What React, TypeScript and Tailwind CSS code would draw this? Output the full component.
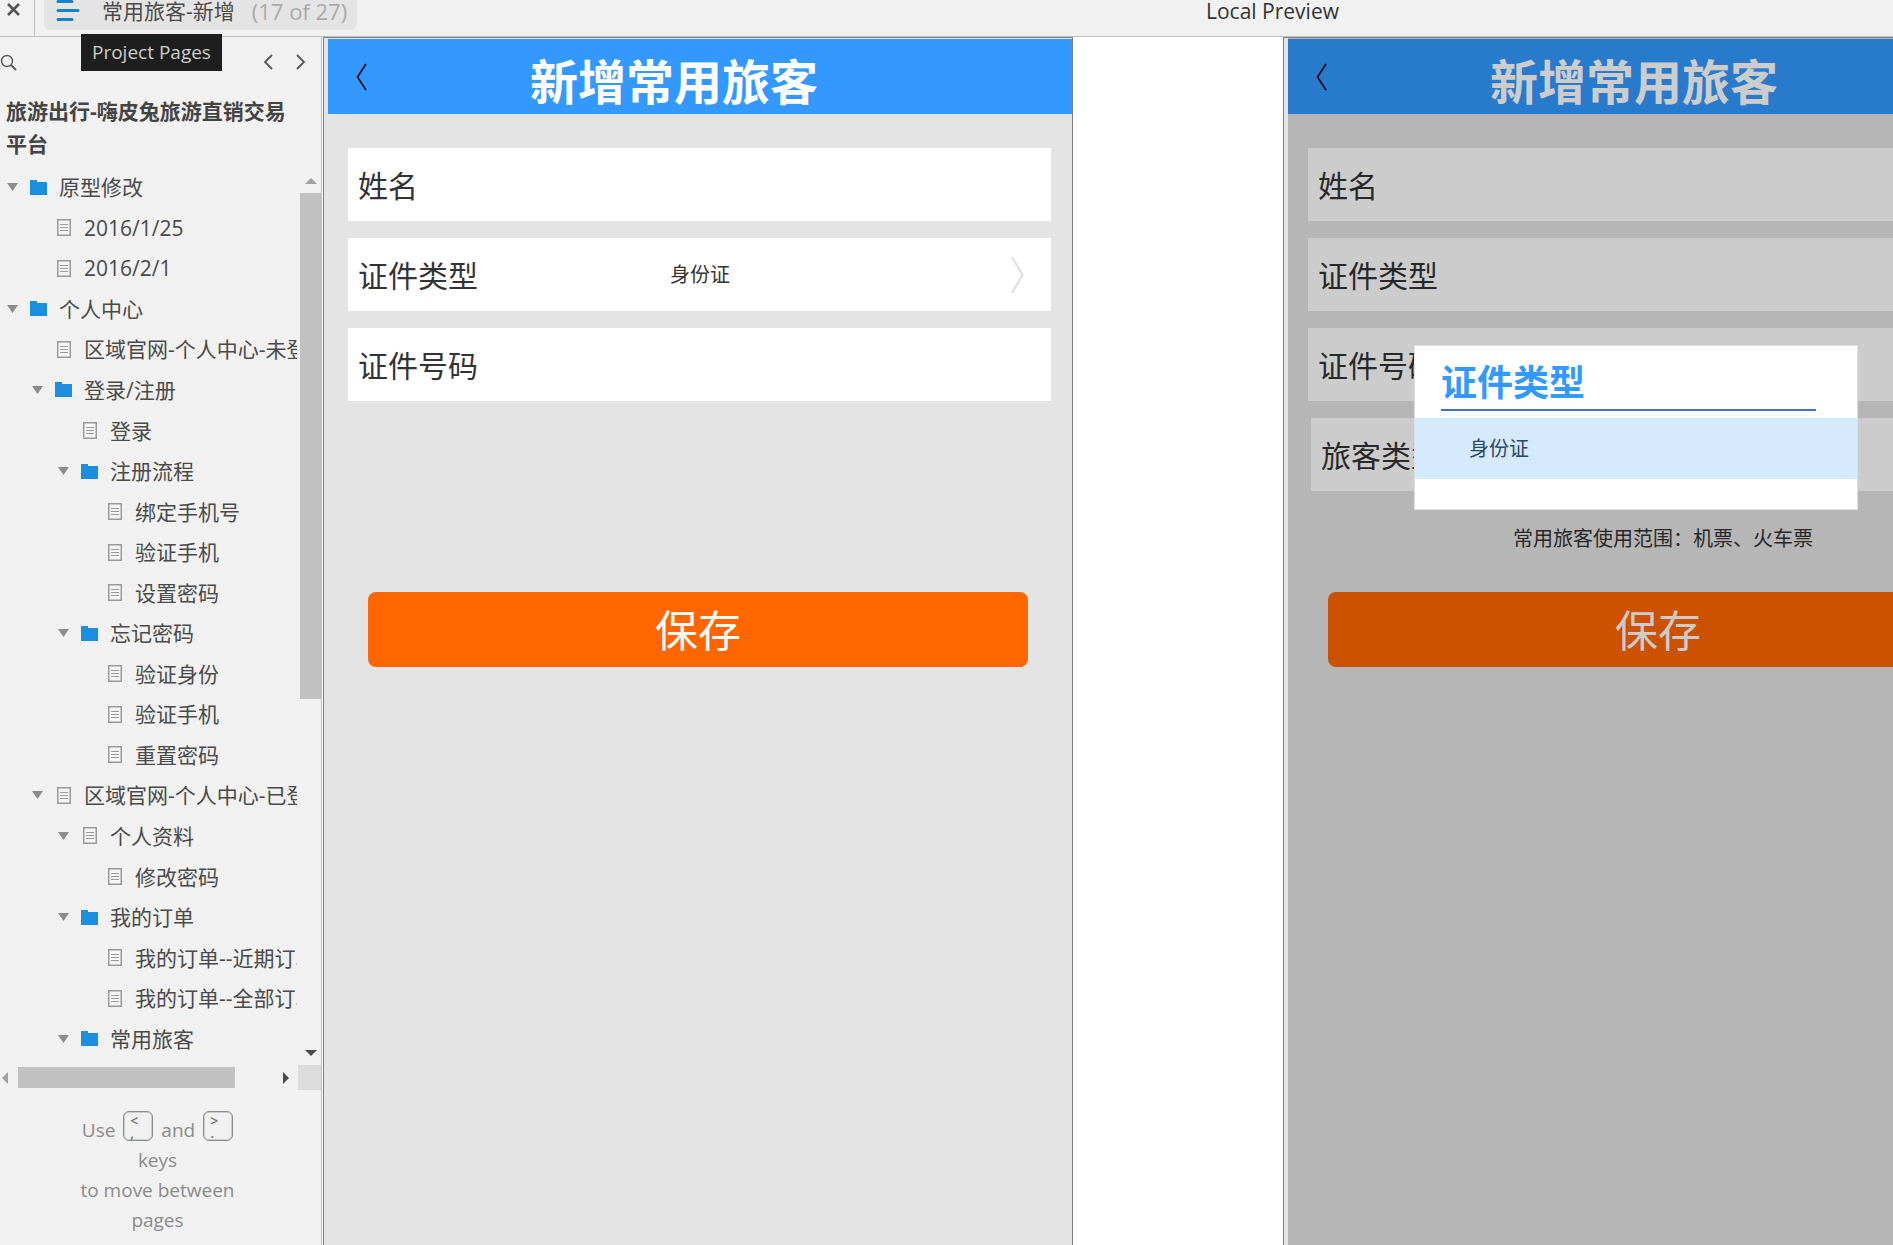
import React, { useState } from 'react';

type TreeItem = {
  text: string;
  level: number;
  folder?: boolean;
  open?: boolean;
};

const pages: TreeItem[] = [
  { text: '原型修改', level: 0, folder: true, open: true },
  { text: '2016/1/25', level: 1 },
  { text: '2016/2/1', level: 1 },
  { text: '个人中心', level: 0, folder: true, open: true },
  { text: '区域官网-个人中心-未登录', level: 1 },
  { text: '登录/注册', level: 1, folder: true, open: true },
  { text: '登录', level: 2 },
  { text: '注册流程', level: 2, folder: true, open: true },
  { text: '绑定手机号', level: 3 },
  { text: '验证手机', level: 3 },
  { text: '设置密码', level: 3 },
  { text: '忘记密码', level: 2, folder: true, open: true },
  { text: '验证身份', level: 3 },
  { text: '验证手机', level: 3 },
  { text: '重置密码', level: 3 },
  { text: '区域官网-个人中心-已登录', level: 1, open: true },
  { text: '个人资料', level: 2, open: true },
  { text: '修改密码', level: 3 },
  { text: '我的订单', level: 2, folder: true, open: true },
  { text: '我的订单--近期订单', level: 3 },
  { text: '我的订单--全部订单', level: 3 },
  { text: '常用旅客', level: 2, folder: true, open: true },
];

const indents = ['pl-[7px]', 'pl-[32px]', 'pl-[58px]', 'pl-[83px]'];

function FolderIcon() {
  return (
    <svg width="17" height="15" viewBox="0 0 17 15" fill="#1a8ee0">
      <path d="M0 0h7v2h10v13H0z" />
    </svg>
  );
}

function PageIcon() {
  return (
    <svg width="14" height="17" viewBox="0 0 14 17" fill="none" stroke="#999" className="ml-[2px]">
      <rect x="0.75" y="0.75" width="12.5" height="15.5" strokeWidth="1.5" fill="#f6f6f6" />
      <path d="M3 5.5h8M3 8.5h8M3 11.5h8" />
    </svg>
  );
}

function Triangle({ points, color, width, height }: { points: string; color: string; width: number; height: number }) {
  return (
    <svg width={width} height={height} viewBox={`0 0 ${width} ${height}`} className="shrink-0">
      <polygon points={points} fill={color} />
    </svg>
  );
}

function TreeRow({ item }: { item: TreeItem }) {
  return (
    <li className={`flex items-center ${indents[item.level]}`}>
      <span className="w-[23px] shrink-0">
        {item.open && <Triangle width={11} height={8} points="0,0 11,0 5.5,8" color="#8c8c8c" />}
      </span>
      <a href="#" className="flex items-center whitespace-nowrap">
        <span className="w-[29px] shrink-0">{item.folder ? <FolderIcon /> : <PageIcon />}</span>
        {item.text}
      </a>
    </li>
  );
}

function Key({ top, bottom }: { top: string; bottom: string }) {
  return (
    <kbd className="flex h-[30px] w-[30px] flex-col rounded-md border border-[#8c8c8c] pl-[6px] text-left font-['Open_Sans',sans-serif] text-[14px] leading-[12px] font-semibold text-[#777] shadow-[inset_0_0_0_1px_#ccc]">
      <span className="pt-[3px]">{top}</span>
      <span>{bottom}</span>
    </kbd>
  );
}

function Sidebar() {
  return (
    <aside className="flex w-[322px] shrink-0 flex-col border-r border-[#c0c0c0] bg-[#f1f1f1]">
      <div className="flex h-[50px] shrink-0 items-center justify-between pr-[15px]">
        <button aria-label="Search">
          <svg width="17" height="17" viewBox="0 0 17 17" fill="none" stroke="#555" strokeWidth="1.4">
            <circle cx="7" cy="7" r="5.5" />
            <path d="M11 11l5 5" strokeWidth="1.8" />
          </svg>
        </button>
        <div className="flex gap-[23px]">
          <button aria-label="Previous page">
            <svg width="10" height="16" viewBox="0 0 10 16" fill="none" stroke="#555" strokeWidth="1.8">
              <path d="M9 1L2 8l7 7" />
            </svg>
          </button>
          <button aria-label="Next page">
            <svg width="10" height="16" viewBox="0 0 10 16" fill="none" stroke="#555" strokeWidth="1.8">
              <path d="M1 1l7 7-7 7" />
            </svg>
          </button>
        </div>
      </div>

      <h1 className="pt-[8px] pr-[28px] pl-[6px] text-[21px] leading-[33px] font-bold text-[#444]">
        旅游出行-嗨皮兔旅游直销交易平台
      </h1>

      <div className="mt-[6px] flex min-h-0 flex-1">
        <ul className="mr-[3px] grid min-w-0 flex-1 auto-rows-fr overflow-hidden text-[21px] leading-[30px] text-[#4a4a4a]">
          {pages.map((item, index) => (
            <TreeRow key={index} item={item} />
          ))}
        </ul>
        {/* vertical scrollbar */}
        <div className="flex w-[21px] flex-col items-center pt-[11px] pb-[3px]">
          <Triangle width={12} height={6} points="0,6 6,0 12,6" color="#a0a0a0" />
          <div className="mt-[9px] w-full flex-1">
            <div className="h-[59%] w-full bg-[#c1c1c1]"></div>
          </div>
          <Triangle width={12} height={6} points="0,0 12,0 6,6" color="#4a4a4a" />
        </div>
      </div>

      {/* horizontal scrollbar */}
      <div className="mt-[6px] flex h-[25px] shrink-0">
        <div className="flex flex-1 items-center pr-[9px] pl-[2px]">
          <Triangle width={6} height={12} points="6,0 0,6 6,12" color="#a0a0a0" />
          <div className="ml-[10px] h-[21px] flex-1">
            <div className="h-full w-[82%] bg-[#c1c1c1]"></div>
          </div>
          <Triangle width={6} height={12} points="0,0 6,6 0,12" color="#4a4a4a" />
        </div>
        <div className="w-[23px] bg-[#dcdcdc]"></div>
      </div>

      <div className="pt-[21px] pr-[6px] pb-[10px] text-center text-[19px] leading-[30px] text-[#8a8a8a]">
        <div className="flex h-[34px] items-start justify-center gap-[8px]">
          <span className="pt-[4px]">Use</span>
          <Key top="<" bottom="," />
          <span className="pt-[4px]">and</span>
          <Key top=">" bottom="." />
        </div>
        <p>keys</p>
        <p>to move between</p>
        <p>pages</p>
      </div>
    </aside>
  );
}

function TopBar() {
  return (
    <header className="relative flex h-[37px] shrink-0 items-start border-b border-[#c0c0c0] bg-[#f1f1f1] text-[21px] leading-[22px]">
      <button aria-label="Close" className="h-full w-[35px] border-r border-[#c0c0c0] pl-[7px]">
        <svg width="13" height="13" viewBox="0 0 13 13" stroke="#555" strokeWidth="2.6" className="-mt-[15px]">
          <path d="M1 1l11 11M12 1L1 12" />
        </svg>
      </button>
      <button className="ml-[9px] flex h-[30px] items-start rounded-b-md bg-[#e4e4e4] pr-[10px] pl-[12px] text-[#4a4a4a]">
        <svg width="24" height="22" viewBox="0 0 24 22" stroke="#1485c4" strokeWidth="3" strokeLinecap="round" className="mr-[22px]">
          <path d="M2 1.5h14M2 10.5h20M2 19.5h14" />
        </svg>
        常用旅客-新增
        <span className="ml-[17px] text-[22px] text-[#aaa]">(17 of 27)</span>
      </button>
      <div className="absolute top-0 left-[1206px] text-[#333]">Local Preview</div>
      <div role="tooltip" className="absolute top-[34px] left-[81px] z-10 bg-[#1e1e1e] px-[11px] text-[19px] leading-[37px] whitespace-nowrap text-[#ccc]">
        Project Pages
      </div>
    </header>
  );
}

function Field({ id, label, options, narrow }: { id: string; label: string; options?: string[]; narrow?: boolean }) {
  return (
    <div className={`flex h-[73px] items-center bg-white pl-[10px] ${narrow ? 'ml-[3px]' : ''}`}>
      <label htmlFor={id} className="w-[312px] pt-[2px] text-[30px] leading-[42px] text-[#333]">
        {label}
      </label>
      {options ? (
        <select id={id} className="min-w-0 flex-1 appearance-none text-[20px] leading-[30px] text-[#333] outline-none">
          {options.map((option) => (
            <option key={option}>{option}</option>
          ))}
        </select>
      ) : (
        <input id={id} type="text" className="min-w-0 flex-1 text-[20px] outline-none" />
      )}
      {options && options[0] !== '' && (
        <svg width="13" height="38" viewBox="0 0 13 38" fill="none" stroke="#ddd" strokeWidth="2" className="mr-[27px]">
          <path d="M1 1l10.500 18L1 37" />
        </svg>
      )}
    </div>
  );
}

function Phone({ children, dialog }: { children: React.ReactNode; dialog?: React.ReactNode }) {
  return (
    <section className="relative w-[750px] shrink-0 border-x border-t border-[#808080] bg-[#e4e4e4] pt-px pl-[4px]">
      <div className="flex h-[75px] items-center bg-[#3399ff] pl-[28px]">
        <button aria-label="返回" className="w-[174px]">
          <svg width="11" height="28" viewBox="0 0 11 28" fill="none" stroke="#000" strokeWidth="1.5">
            <path d="M10 1L1.500 14L10 27" />
          </svg>
        </button>
        <h2 className="pt-[10px] text-[48px] leading-[60px] font-bold whitespace-nowrap text-white">新增常用旅客</h2>
      </div>
      <form className="flex flex-col gap-[17px] pt-[34px] pr-[21px] pl-[20px]">
        {children}
      </form>
      {dialog}
    </section>
  );
}

function SaveButton() {
  return (
    <button type="button" className="h-[75px] rounded-lg bg-[#ff6600] pt-[3px] text-[43px] leading-[60px] text-white">
      保存
    </button>
  );
}

function TypeDialog() {
  const [selected, setSelected] = useState<boolean>(true);

  return (
    <>
      <div className="absolute inset-y-0 right-0 left-[4px] bg-black/20"></div>
      <div role="dialog" aria-label="证件类型" className="absolute top-[307px] left-[130px] h-[165px] w-[444px] border border-[#e0e0e0] bg-white">
        <h3 className="mr-[41px] ml-[26px] border-b-2 border-[#4472c4] pt-[14px] pb-[4px] text-[36px] leading-[45px] font-bold text-[#3399ff]">
          证件类型
        </h3>
        <button
          onClick={() => setSelected(!selected)}
          className={`mt-[7px] block h-[61px] w-full pl-[54px] text-left text-[20px] text-[#2c4866] ${selected ? 'bg-[#d6eaff]' : 'bg-white'}`}
        >
          身份证
        </button>
      </div>
    </>
  );
}

export default function App() {
  return (
    <div className="flex h-screen flex-col overflow-hidden bg-white font-['Open_Sans','Noto_Sans_CJK_SC',sans-serif]">
      <TopBar />
      <div className="flex min-h-0 flex-1">
        <Sidebar />
        <main className="flex min-w-0 flex-1 gap-[210px] overflow-hidden pl-px">
          <Phone>
            <Field id="name" label="姓名" />
            <Field id="type" label="证件类型" options={['身份证']} />
            <Field id="number" label="证件号码" />
            <div className="mt-[174px] mr-[23px] ml-[20px] flex flex-col">
              <SaveButton />
            </div>
          </Phone>
          <Phone dialog={<TypeDialog />}>
            <Field id="name-2" label="姓名" />
            <Field id="type-2" label="证件类型" options={['']} />
            <Field id="number-2" label="证件号码" />
            <Field id="traveller-2" label="旅客类型" options={['']} narrow />
            <div className="mt-[16px] mr-[23px] ml-[20px] flex flex-col">
              <p className="pb-[38px] pl-[185px] text-[20px] leading-[30px] text-[#333]">常用旅客使用范围：机票、火车票</p>
              <SaveButton />
            </div>
          </Phone>
        </main>
      </div>
    </div>
  );
}
